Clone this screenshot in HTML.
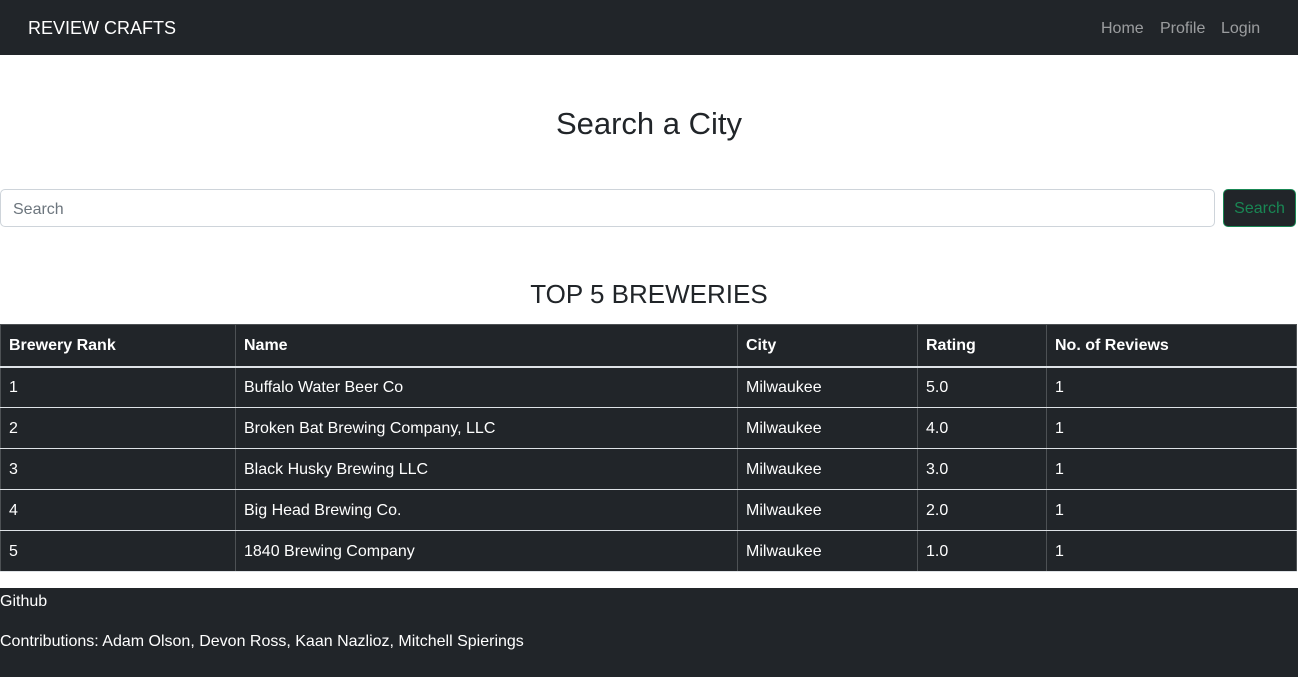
<!DOCTYPE html>
<html><head><style>
*{box-sizing:border-box;margin:0;padding:0}
body{width:1298px;height:677px;overflow:hidden;font-family:"Liberation Sans",sans-serif;color:#212529;background:#fff;font-size:16px}
.nav{height:55px;background:#212529;position:relative}
.brand{position:absolute;left:28px;top:18px;color:#fff;font-size:18px}
.links a{position:absolute;top:20px;color:rgba(255,255,255,.55);font-size:16px;text-decoration:none}
h1{position:absolute;top:106px;width:1298px;text-align:center;font-size:31px;font-weight:500}
.inp{position:absolute;left:0;top:189px;width:1215px;height:38px;border:1px solid #ced4da;border-radius:5px;padding:0 12px;line-height:40px;color:#6c757d}
.btn{position:absolute;left:1223px;top:189px;width:73px;height:38px;background:#212529;border:1px solid #198754;border-radius:5px;color:#198754;text-align:center;line-height:38px}
h2{position:absolute;top:279px;width:1298px;text-align:center;font-size:26px;font-weight:500}
table{position:absolute;left:0;top:324px;width:1296px;border-collapse:collapse;background:#212529;color:#fff;table-layout:fixed}
td,th{height:41px;padding:2px 8px 0;text-align:left;border:1px solid #4d5154;border-bottom:1px solid #dee2e6;font-size:16px}
th{font-weight:bold;height:42px;border-bottom:2px solid #dee2e6}
.foot{position:absolute;top:588px;left:0;width:1298px;height:89px;background:#212529;color:#fff}
.foot div{position:absolute;left:0}
</style></head><body>
<div class="nav"><span class="brand">REVIEW CRAFTS</span>
<div class="links"><a style="left:1101px">Home</a><a style="left:1160px">Profile</a><a style="left:1221px">Login</a></div></div>
<h1>Search a City</h1>
<div class="inp">Search</div><div class="btn">Search</div>
<h2>TOP 5 BREWERIES</h2>
<table>
<colgroup><col style="width:235px"><col style="width:502px"><col style="width:180px"><col style="width:129px"><col style="width:250px"></colgroup>
<tr><th>Brewery Rank</th><th>Name</th><th>City</th><th>Rating</th><th>No. of Reviews</th></tr>
<tr><td>1</td><td>Buffalo Water Beer Co</td><td>Milwaukee</td><td>5.0</td><td>1</td></tr>
<tr><td>2</td><td>Broken Bat Brewing Company, LLC</td><td>Milwaukee</td><td>4.0</td><td>1</td></tr>
<tr><td>3</td><td>Black Husky Brewing LLC</td><td>Milwaukee</td><td>3.0</td><td>1</td></tr>
<tr><td>4</td><td>Big Head Brewing Co.</td><td>Milwaukee</td><td>2.0</td><td>1</td></tr>
<tr><td>5</td><td>1840 Brewing Company</td><td>Milwaukee</td><td>1.0</td><td>1</td></tr>
</table>
<div class="foot"><div style="top:5px">Github</div><div style="top:45px">Contributions: Adam Olson, Devon Ross, Kaan Nazlioz, Mitchell Spierings</div></div>
</body></html>
